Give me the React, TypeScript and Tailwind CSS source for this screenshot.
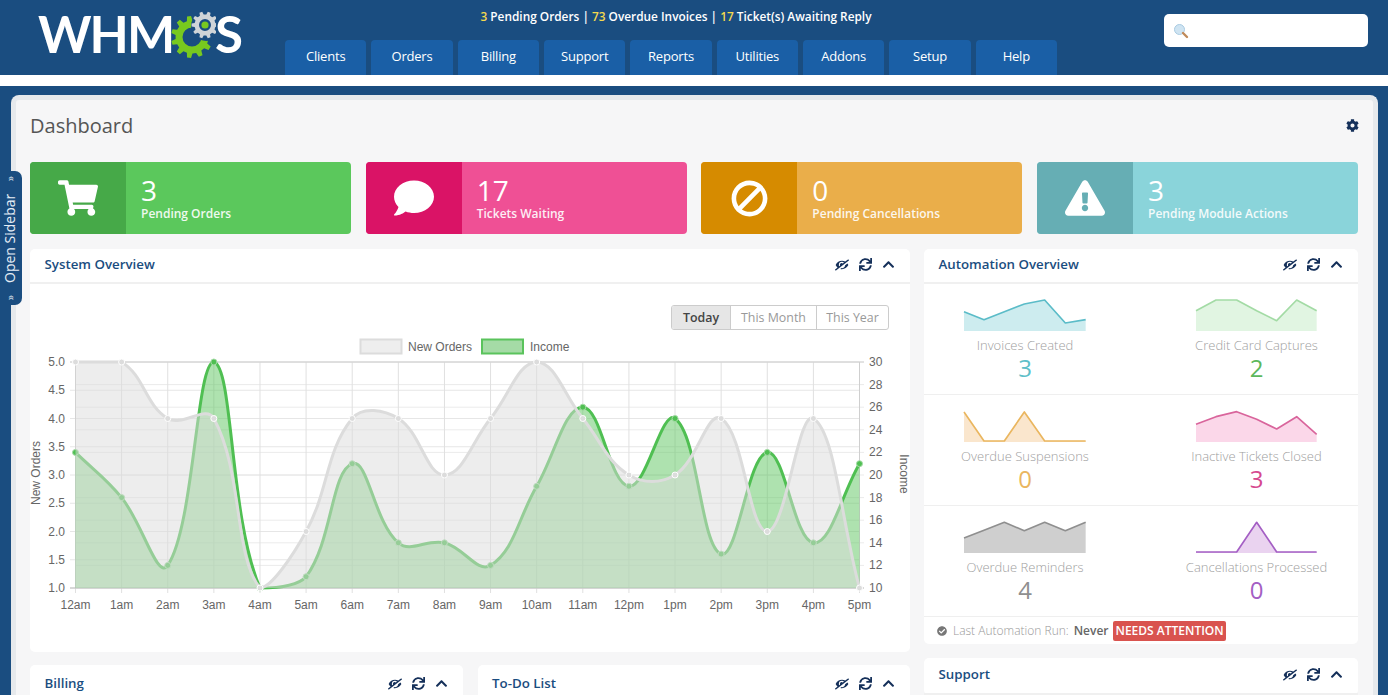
import React from "react";
import { FaShoppingCart, FaComment, FaBan, FaExclamationTriangle, FaCog, FaEyeSlash, FaSync, FaChevronUp, FaCheckCircle } from "react-icons/fa";

type P = [number, number];
const xs = Array.from({ length: 18 }, (_, i) => 75.5 + (i * 784) / 17);
const TOP = 362;
const BOTTOM = 588;
const labels = ["12am", "1am", "2am", "3am", "4am", "5am", "6am", "7am", "8am", "9am", "10am", "11am", "12pm", "1pm", "2pm", "3pm", "4pm", "5pm"];
const orders = [5, 5, 4, 4, 1, 2, 4, 4, 3, 4, 5, 4, 3, 3, 4, 2, 4, 1];
const income = [22, 18, 12, 30, 10, 11, 21, 14, 14, 12, 19, 26, 19, 25, 13, 22, 14, 21];
const orderPts: P[] = orders.map((v, i) => [xs[i], BOTTOM - ((v - 1) / 4) * (BOTTOM - TOP)]);
const incomePts: P[] = income.map((v, i) => [xs[i], BOTTOM - ((v - 10) / 20) * (BOTTOM - TOP)]);

function spline(pts: P[]) {
  const t = 0.4;
  const clamp = (y: number) => Math.max(TOP, Math.min(BOTTOM, y));
  let d = `M${pts[0][0]} ${pts[0][1]}`;
  const ctrl = pts.map((p, i) => {
    const a = pts[Math.max(i - 1, 0)];
    const b = pts[Math.min(i + 1, pts.length - 1)];
    const d01 = Math.hypot(p[0] - a[0], p[1] - a[1]);
    const d12 = Math.hypot(b[0] - p[0], b[1] - p[1]);
    const s = d01 + d12 || 1;
    const fa = (t * d01) / s;
    const fb = (t * d12) / s;
    return {
      prev: [p[0] - fa * (b[0] - a[0]), clamp(p[1] - fa * (b[1] - a[1]))] as P,
      next: [p[0] + fb * (b[0] - a[0]), clamp(p[1] + fb * (b[1] - a[1]))] as P,
    };
  });
  for (let i = 1; i < pts.length; i++) {
    d += `C${ctrl[i - 1].next[0]} ${ctrl[i - 1].next[1]} ${ctrl[i].prev[0]} ${ctrl[i].prev[1]} ${pts[i][0]} ${pts[i][1]}`;
  }
  return d;
}

function gear(cx: number, cy: number, R: number, r: number, hole: number, n: number) {
  let d = "";
  const step = (Math.PI * 2) / n;
  for (let i = 0; i < n; i++) {
    const a = i * step;
    const seq: [number, number][] = [
      [a - step * 0.3, r],
      [a - step * 0.17, R],
      [a + step * 0.17, R],
      [a + step * 0.3, r],
    ];
    seq.forEach(([ang, rad]) => {
      d += `${d ? "L" : "M"}${cx + rad * Math.cos(ang)} ${cy + rad * Math.sin(ang)}`;
    });
  }
  d += `ZM${cx + hole} ${cy}A${hole} ${hole} 0 1 0 ${cx - hole} ${cy}A${hole} ${hole} 0 1 0 ${cx + hole} ${cy}Z`;
  return d;
}

function Logo() {
  return (
    <div className="flex items-center h-[75px] pl-[38px] w-[285px] text-white font-['Lato','Open_Sans',sans-serif] font-bold text-[51px] leading-none">
      <span className="tracking-[-2px] -mt-[8px]">WHM</span>
      <svg width="46" height="48" viewBox="170 8 46 48" className="shrink-0 -mt-[8px] -ml-[3px]">
        <path d={gear(192, 35, 21, 16.5, 9.5, 11)} fill="#78c91f" fillRule="evenodd" />
        <circle cx="206" cy="24" r="15" fill="#1a4d80" />
        <path d={gear(205, 23, 13.5, 10.5, 6, 10)} fill="#cfd4d8" fillRule="evenodd" />
        <circle cx="205" cy="23" r="3.6" fill="#78c91f" />
      </svg>
      <span className="-ml-[1px] -mt-[8px] scale-x-100 origin-left">S</span>
    </div>
  );
}

const navItems = ["Clients", "Orders", "Billing", "Support", "Reports", "Utilities", "Addons", "Setup", "Help"];

function Header() {
  return (
    <header className="flex h-[75px] bg-[#1a4d80] shrink-0">
      <Logo />
      <div className="w-[772px] flex flex-col justify-between">
        <div className="pt-[8px] pl-[10px] text-center text-[11.85px] leading-[17px] font-semibold text-white">
          <span className="text-[#f4d94e]">3</span> Pending Orders | <span className="text-[#f4d94e]">73</span> Overdue Invoices | <span className="text-[#f4d94e]">17</span> Ticket(s) Awaiting Reply
        </div>
        <nav className="flex gap-[5px]">
          {navItems.map((n) => (
            <div key={n} className="w-[81.6px] h-[35px] pb-[2px] flex items-center justify-center bg-[#1a5fa6] rounded-t-[4px] text-[13px] tracking-[-0.2px] text-white">
              {n}
            </div>
          ))}
        </nav>
      </div>
      <div className="ml-[107px] mt-[14px] w-[204px] h-[33px] bg-white rounded-[5px] flex items-center pl-[9px]">
        <svg width="16" height="16" viewBox="0 0 16 16">
          <circle cx="6.5" cy="6.5" r="5" fill="#cfe4f2" stroke="#a9cbe2" strokeWidth="1" />
          <path d="M10 10l4 4" stroke="#c08a5a" strokeWidth="2.4" strokeLinecap="round" />
        </svg>
      </div>
    </header>
  );
}

function Stat({ dark, light, icon, value, label }: { dark: string; light: string; icon: React.ReactNode; value: string; label: string }) {
  return (
    <div className={`h-[72px] flex rounded-[4px] overflow-hidden text-white ${light}`}>
      <div className={`w-[96px] flex items-center justify-center text-[40px] ${dark}`}>{icon}</div>
      <div className="pl-[15px] pt-[12px]">
        <div className="text-[28px] leading-[32px]">{value}</div>
        <div className="text-[12px] leading-[16px] font-semibold opacity-90">{label}</div>
      </div>
    </div>
  );
}

function PanelHead({ title, height = "h-[33px]" }: { title: string; height?: string }) {
  return (
    <div className={`${height} box-content shrink-0 flex items-center justify-between pl-[14.5px] pr-[15px] pb-0 border-b-2 border-[#f0f0f0]`}>
      <div className="w-full flex items-center justify-between -translate-y-[1px]">
        <span className="text-[13.3px] font-semibold text-[#1a4d80]">{title}</span>
        <div className="flex items-center gap-[10px] text-[#15305a]">
          <FaEyeSlash className="text-[14px] scale-x-[-1]" />
          <FaSync className="text-[13px]" />
          <FaChevronUp className="text-[13px]" />
        </div>
      </div>
    </div>
  );
}

function Chart() {
  const hLeft = Array.from({ length: 9 }, (_, i) => TOP + (i * (BOTTOM - TOP)) / 8);
  const hRight = Array.from({ length: 11 }, (_, i) => TOP + (i * (BOTTOM - TOP)) / 10);
  const leftLabels = ["5.0", "4.5", "4.0", "3.5", "3.0", "2.5", "2.0", "1.5", "1.0"];
  const rightLabels = ["30", "28", "26", "24", "22", "20", "18", "16", "14", "12", "10"];
  const ordersPath = spline(orderPts);
  const incomePath = spline(incomePts);
  const close = `L859.5 ${BOTTOM}L75.5 ${BOTTOM}Z`;
  const font = "'Liberation Sans', Arial, sans-serif";
  return (
    <svg width="880" height="322" viewBox="30 330 880 322" className="block" fontFamily={font} fontSize="12" fill="#666">
      <rect x="360.5" y="339.5" width="41" height="14" fill="#eeeeee" stroke="#dcdcdc" strokeWidth="2" />
      <text x="408" y="351">New Orders</text>
      <rect x="482" y="339.5" width="41" height="14" fill="#a5dba6" stroke="#5ac35c" strokeWidth="2" />
      <text x="530" y="351">Income</text>

      {hRight.map((y) => <line key={`r${y}`} x1="75.5" x2="864" y1={y} y2={y} stroke="#ebebeb" />)}
      {hLeft.map((y) => <line key={`l${y}`} x1="70" x2="859.5" y1={y} y2={y} stroke="#e6e6e6" />)}
      {xs.map((x) => <line key={x} x1={x} x2={x} y1={TOP} y2={BOTTOM + 5} stroke="#e0e0e0" />)}
      <line x1="75.5" x2="75.5" y1={TOP} y2={BOTTOM} stroke="#cfcfcf" />
      <line x1="859.5" x2="859.5" y1={TOP} y2={BOTTOM} stroke="#cfcfcf" />
      <line x1="70" x2="864" y1={TOP} y2={TOP} stroke="#d0d0d0" />
      <line x1="70" x2="864" y1={BOTTOM} y2={BOTTOM} stroke="#bdbdbd" />

      <path d={incomePath + close} fill="rgba(93,197,96,0.5)" />
      <path d={incomePath} fill="none" stroke="#4fbf52" strokeWidth="3" />
      {incomePts.map((p, i) => <circle key={i} cx={p[0]} cy={p[1]} r="3" fill="#4fbf52" stroke="#a5dba6" strokeWidth="1" />)}

      <path d={ordersPath + close} fill="rgba(220,220,220,0.5)" />
      <path d={ordersPath} fill="none" stroke="#dcdcdc" strokeWidth="3" />
      {orderPts.map((p, i) => <circle key={i} cx={p[0]} cy={p[1]} r="3" fill="#dcdcdc" stroke="#ffffff" strokeWidth="1" />)}

      {leftLabels.map((t, i) => <text key={t} x="65" y={hLeft[i] + 4} textAnchor="end">{t}</text>)}
      {rightLabels.map((t, i) => <text key={t} x="869" y={hRight[i] + 4}>{t}</text>)}
      {labels.map((t, i) => <text key={t} x={xs[i]} y="609" textAnchor="middle">{t}</text>)}
      <text transform="translate(40 473) rotate(-90)" textAnchor="middle">New Orders</text>
      <text transform="translate(900 474) rotate(90)" textAnchor="middle">Income</text>
    </svg>
  );
}

function Spark({ pts, stroke, fill }: { pts: P[]; stroke: string; fill: string }) {
  const line = pts.map((p) => p.join(",")).join(" ");
  const area = `${pts[0][0]},96 ${line} ${pts[pts.length - 1][0]},96`;
  return (
    <svg width="122" height="32" viewBox="0 0 366 96" className="block overflow-visible">
      <polygon points={area} fill={fill} />
      <polyline points={line} fill="none" stroke={stroke} strokeWidth="5" strokeLinejoin="round" />
    </svg>
  );
}

const sparks = [
  { label: "Invoices Created", value: "3", color: "text-[#5fbfc9]", stroke: "#5bbcc8", fill: "#cdecef", pts: [[0, 38], [60, 62], [121, 38], [181, 15], [242, 3], [304, 72], [365, 62]] as P[] },
  { label: "Credit Card Captures", value: "2", color: "text-[#5cb85c]", stroke: "#a3dba5", fill: "#e1f5e2", pts: [[0, 35], [60, 3], [122, 3], [182, 35], [242, 65], [302, 3], [362, 35]] as P[] },
  { label: "Overdue Suspensions", value: "0", color: "text-[#eab65f]", stroke: "#eab65f", fill: "#fae6cd", pts: [[0, 6], [60, 93], [121, 93], [181, 6], [242, 93], [304, 93], [365, 93]] as P[] },
  { label: "Inactive Tickets Closed", value: "3", color: "text-[#d6498f]", stroke: "#d9659c", fill: "#fbd7e9", pts: [[0, 43], [60, 20], [122, 5], [182, 28], [242, 57], [302, 20], [362, 73]] as P[] },
  { label: "Overdue Reminders", value: "4", color: "text-[#8f8f8f]", stroke: "#8f8f8f", fill: "#cfcfcf", pts: [[0, 51], [60, 28], [121, 4], [181, 29], [242, 4], [304, 29], [365, 4]] as P[] },
  { label: "Cancellations Processed", value: "0", color: "text-[#a45fc4]", stroke: "#a45fc4", fill: "#ead3f0", pts: [[0, 93], [122, 93], [182, 4], [242, 93], [362, 93]] as P[] },
];

function Automation() {
  return (
    <div className="flex-1 grid grid-cols-[202px_232px] grid-rows-3">
      {sparks.map((s, i) => (
        <div key={s.label} className={`flex flex-col items-center pt-[15px] border-b border-[#efefef] ${i % 2 ? "pl-[29px]" : ""}`}>
          <Spark pts={s.pts} stroke={s.stroke} fill={s.fill} />
          <div className="text-[13px] leading-[18px] mt-[5px] whitespace-nowrap text-[#a0a0a0] font-light">{s.label}</div>
          <div className={`text-[24px] leading-[28px] ${s.color}`}>{s.value}</div>
        </div>
      ))}
    </div>
  );
}

export default function App() {
  return (
    <div className="h-[695px] overflow-hidden bg-[#1a4d80] relative flex flex-col font-['Open_Sans',sans-serif]">
      <Header />
      <div className="h-[11px] bg-white shrink-0" />
      <main className="mt-[9px] ml-[11px] mr-[10px] flex-1 min-h-0 bg-[#f6f6f7] border-[5px] border-b-0 border-[#e6e9ec] rounded-t-[8px] pl-[14px] pr-[15px] overflow-hidden">
        <div className="h-[62px] flex items-start justify-between pt-[12px]">
          <h1 className="text-[20px] leading-[28px] text-[#555]">Dashboard</h1>
          <FaCog className="text-[13px] text-[#15305a] mt-[7px] mr-0 translate-x-[1px]" />
        </div>
        <section className="grid grid-cols-4 gap-[14.7px]">
          <Stat dark="bg-[#46a948]" light="bg-[#5bc85c]" icon={<FaShoppingCart />} value="3" label="Pending Orders" />
          <Stat dark="bg-[#da1366]" light="bg-[#ef5095]" icon={<FaComment />} value="17" label="Tickets Waiting" />
          <Stat dark="bg-[#d68b00]" light="bg-[#eaae4a]" icon={<FaBan className="scale-x-[-1] text-[37px]" />} value="0" label="Pending Cancellations" />
          <Stat dark="bg-[#66aeb4]" light="bg-[#8ad4da]" icon={<FaExclamationTriangle />} value="3" label="Pending Module Actions" />
        </section>
        <section className="flex gap-[14px] mt-[15px]">
          <div className="w-[880px] shrink-0">
            <div className="h-[403px] bg-white rounded-[5px] flex flex-col">
              <PanelHead title="System Overview" />
              <div className="flex justify-end pt-[21px] pr-[21px] h-[46px] shrink-0">
                <div className="flex h-[25px] text-[12.4px] border border-[#ccc] rounded-[3px] overflow-hidden text-[#999]">
                  <div className="w-[58px] pt-[1px] flex items-center justify-center bg-[#e6e6e6] text-[#444] font-semibold">Today</div>
                  <div className="w-[86px] pt-[1px] flex items-center justify-center border-l border-[#ccc]">This Month</div>
                  <div className="w-[72px] pt-[1px] flex items-center justify-center border-l border-[#ccc]">This Year</div>
                </div>
              </div>
              <Chart />
            </div>
            <div className="grid grid-cols-2 gap-[15px] mt-[13px]">
              <div className="bg-white rounded-[5px]"><PanelHead title="Billing" height="h-[39px]" /></div>
              <div className="bg-white rounded-[5px]"><PanelHead title="To-Do List" height="h-[39px]" /></div>
            </div>
          </div>
          <div className="w-[434px] shrink-0">
            <div className="h-[395px] bg-white rounded-[5px] flex flex-col">
              <PanelHead title="Automation Overview" />
              <Automation />
              <div className="h-[27px] shrink-0 flex items-center pl-[13px] text-[12px] text-[#999] font-light">
                <FaCheckCircle className="text-[#777] text-[10px] mr-[6px]" />
                <span>Last Automation Run:</span>
                <span className="font-semibold text-[#666] ml-[5px]">Never</span>
                <span className="ml-[5px] bg-[#d9534f] text-white font-semibold px-[2px] h-[20px] leading-[19px] rounded-[2px]">NEEDS ATTENTION</span>
              </div>
            </div>
            <div className="bg-white rounded-[5px] mt-[14px]"><PanelHead title="Support" height="h-[35px]" /></div>
          </div>
        </section>
      </main>
      <div className="absolute left-0 top-[171px] w-[22px] h-[134px] bg-[#1a4d80] rounded-r-[7px] text-[#e6eef6] text-[14px] flex items-center justify-center">
        <div className="[writing-mode:vertical-rl] rotate-180 flex items-center justify-between h-[124px] leading-none -translate-x-[1px]">
          <span className="text-[10px]">»</span>
          <span>Open Sidebar</span>
          <span className="text-[10px]">»</span>
        </div>
      </div>
    </div>
  );
}
